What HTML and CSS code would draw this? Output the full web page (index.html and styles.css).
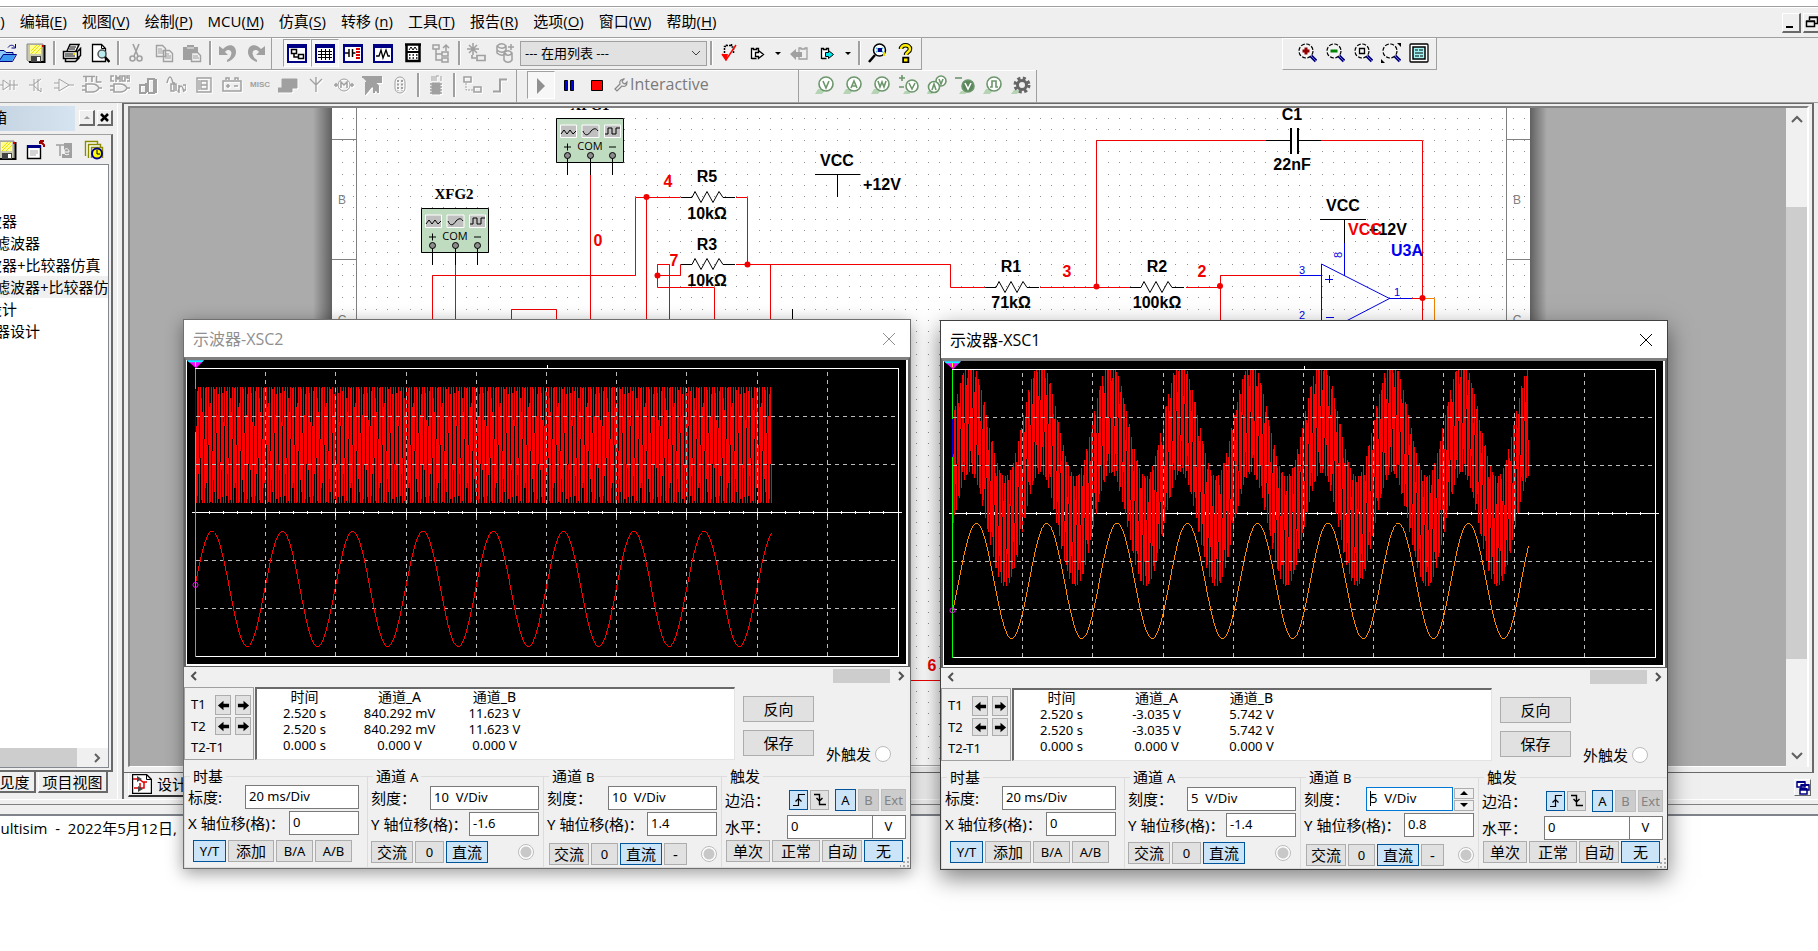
FILE: index.html
```html
<!DOCTYPE html>
<html lang="zh-CN">
<head>
<meta charset="utf-8">
<title>Multisim</title>
<link rel="stylesheet" href="styles.css">
</head>
<body>
<svg class="defs" aria-hidden="true">
  <defs>
    <symbol id="i-open" viewBox="0 0 20 20"><path d="M0 7h6l2 2h7v3H5L1 18H0z" fill="#8cc8f8"/><path d="M1 18L5 11h13l-4 7z" fill="#3c98f0"/><path d="M0 18.500h14.500L18.500 11.500H5.500L1 18M0 7.500h6l2 2h7v2M10 4.500c2-3 5-3 7 0M17.500 1v4h-4" fill="none" stroke="#00007c"/></symbol>
    <symbol id="i-save" viewBox="0 0 20 20"><path d="M1 1h16v18H3l-2-2z" fill="#c8c8b0" stroke="#888"/><path d="M18.500 2v17H3" stroke="#000" stroke-width="2" fill="none"/><path d="M4 2h11v9H4z" fill="#fffc90"/><path d="M5 8l6-6M5 11l9-9M9 11l6-6" stroke="#e8e000"/><path d="M5 13h10v6H5z" fill="#444"/><path d="M11 14h3v4h-3z" fill="#fff"/><path d="M16 2h2v2h-2z" fill="#d00"/></symbol>
    <symbol id="i-print" viewBox="0 0 20 20"><path d="M5 8L8 1.500h9L14 8M1.500 8.500h14l3-3v7l-3 3h-14zM15.500 8.500v7M3.500 15.500v3h10l4-4" fill="#fff" stroke="#000" stroke-width="1.500"/><path d="M8 4h6M7 6h6M3 11h10M3 13h10" stroke="#000"/><path d="M11 10h2v2h-2z" fill="#e8d800"/></symbol>
    <symbol id="i-preview" viewBox="0 0 20 20"><path d="M2.500 1.500h9l4 4v13h-13z" fill="#fff" stroke="#000" stroke-width="1.300"/><path d="M11.500 1.500v4h4" fill="none" stroke="#000"/><circle cx="12" cy="11" r="4" fill="#b8ecf0" stroke="#555" stroke-width="1.500"/><path d="M15 14l4.500 5" stroke="#000" stroke-width="2.500"/></symbol>
    <symbol id="i-cut" viewBox="0 0 20 20"><path d="M7 1l5 12M13 1L8 13" stroke="#a0a0a0" stroke-width="1.600"/><circle cx="6.500" cy="15.500" r="2.500" fill="none" stroke="#a0a0a0" stroke-width="1.600"/><circle cx="13.500" cy="15.500" r="2.500" fill="none" stroke="#a0a0a0" stroke-width="1.600"/></symbol>
    <symbol id="i-copy" viewBox="0 0 20 20"><path d="M2.500 2.500h6l3 3v8h-9zM9.500 7.500h6l3 3v8h-9z" fill="#efefef" stroke="#a0a0a0" stroke-width="1.400"/><path d="M4 6h4M4 8h5M4 10h5M11 11h4M11 13h6M11 15h6" stroke="#a0a0a0"/></symbol>
    <symbol id="i-paste" viewBox="0 0 20 20"><path d="M1 4h4V2h7v2h4v13H1z" fill="#a0a0a0"/><path d="M5 5h7" stroke="#efefef"/><path d="M9.500 9.500h6l3 3v6h-9z" fill="#efefef" stroke="#a0a0a0" stroke-width="1.400"/><path d="M11 13h5M11 15h6" stroke="#a0a0a0"/></symbol>
    <symbol id="i-undo" viewBox="0 0 20 20"><path d="M1 3v9h9l-3-3c3-4 8-1 6 3-.5 2-2 4-4 5v2c6-2 9-6 9-10 0-8-8-9-13-3z" fill="#a0a0a0"/></symbol>
    <symbol id="i-redo" viewBox="0 0 20 20"><path d="M19 3v9h-9l3-3c-3-4-8-1-6 3 .5 2 2 4 4 5v2c-6-2-9-6-9-10 0-8 8-9 13-3z" fill="#a0a0a0"/></symbol>
    <symbol id="i-design" viewBox="0 0 20 20"><path d="M1 2h18v17H1z" fill="#fff" stroke="#000084" stroke-width="2"/><path d="M0 1h20v4H0z" fill="#000084"/><path d="M4.500 6.500h5v4h-5zM11.500 11.500h5v4h-5zM7 10v4h4" fill="none" stroke="#000" stroke-width="1.500"/></symbol>
    <symbol id="i-grid" viewBox="0 0 20 20"><path d="M1 2h18v17H1z" fill="#fff" stroke="#000084" stroke-width="2"/><path d="M0 1h20v4H0z" fill="#000084"/><path d="M3 8.500h14M3 11.500h14M3 14.500h14M6.500 6v11M10.500 6v11M14.500 6v11" stroke="#000"/></symbol>
    <symbol id="i-comp" viewBox="0 0 20 20"><path d="M1 2h18v17H1z" fill="#fff" stroke="#000084" stroke-width="2"/><path d="M0 1h20v3H0z" fill="#000084"/><path d="M2 10h4M9.500 10h3M6 6v8M9.500 6v8" stroke="#000" stroke-width="1.500"/><path d="M13 5h4v2h-4zM13 8h4v2h-4zM13 11h4v2h-4zM13 14h4v2h-4z" fill="#e00000"/></symbol>
    <symbol id="i-graph" viewBox="0 0 20 20"><path d="M1 2h18v17H1z" fill="#fff" stroke="#000084" stroke-width="2"/><path d="M0 1h20v4H0z" fill="#000084"/><path d="M3 13h3l2-6 2 8 3-8 2 6h2" fill="none" stroke="#000" stroke-width="1.300"/></symbol>
    <symbol id="i-calc" viewBox="0 0 20 20"><path d="M2 1.500h16M3.500 2v16h13V2" fill="#fff" stroke="#000" stroke-width="2.500"/><path d="M6 7l2-3 2 3 2-3 2 3" fill="none" stroke="#000"/><path d="M3 9h14" stroke="#000" stroke-width="2"/><path d="M6 12h9M6 15h9" stroke="#000" stroke-width="1.500" stroke-dasharray="1.500 2"/></symbol>
    <symbol id="i-tree" viewBox="0 0 20 20"><path d="M2 2h6v4H2zM11 9h6v4h-6zM11 15h6v4h-6zM5 6v11h6M5 11h6M15 8V3M12 5l3-3 3 3" fill="none" stroke="#a0a0a0" stroke-width="1.500"/></symbol>
    <symbol id="i-new" viewBox="0 0 20 20"><path d="M6 0v12M0 6h12M2 2l8 8M10 2l-8 8" stroke="#a0a0a0" stroke-width="1.500"/><path d="M5 12v3h4M10 12.500h8v5h-8z" fill="none" stroke="#a0a0a0" stroke-width="1.700"/></symbol>
    <symbol id="i-db" viewBox="0 0 20 20"><g fill="none" stroke="#a0a0a0" stroke-width="1.500"><path d="M2 3c3-3 7-3 9 0v7c-2 3-6 3-9 0zM2 3c3 3 7 3 9 0M2 7c3 3 7 3 9 0"/><path d="M9 10c2-3 6-3 8 0v7c-2 3-6 3-8 0zM9 10c2 3 6 3 8 0M13 4h6M16 1v6" fill="#efefef"/></g></symbol>
    <symbol id="i-erc" viewBox="0 0 20 20"><path d="M5.500 13V3.500h2v-2M7 2.500h6M12.500 1v3h2V10" fill="none" stroke="#000" stroke-width="1.500" stroke-dasharray="2 1"/><path d="M3 11l4 6L17 2" stroke="red" fill="none" stroke-width="1.500"/><path d="M3 11h6l-2 7z" fill="red"/></symbol>
    <symbol id="i-page" viewBox="0 0 20 20"><path d="M4.500 16V5.500h2v1h3v-1h2v3M4.500 15.500h5" fill="#fff" stroke="#000" stroke-width="1.300"/><path d="M8.500 9.500h3v-2l5 4-5 4v-2h-3z" fill="#fff" stroke="#000" stroke-width="1.300"/></symbol>
    <symbol id="i-back" viewBox="0 0 20 20"><path d="M10 16V5h2v1h4V5h2v11z" fill="#efefef" stroke="#a0a0a0" stroke-width="1.300"/><path d="M1 11l6-5v3h6v5H7v3z" fill="#a0a0a0"/></symbol>
    <symbol id="i-fwd" viewBox="0 0 20 20"><path d="M4.500 16V5.500h2v1h3v-1h2v3M4.500 15.500h5" fill="#fff" stroke="#000" stroke-width="1.300"/><path d="M8.500 9.500h3v-2l5 4-5 4v-2h-3z" fill="#00e8f0" stroke="#000" stroke-width="1"/></symbol>
    <symbol id="i-find" viewBox="0 0 20 20"><circle cx="12.500" cy="7" r="6" fill="#fff" stroke="#000" stroke-width="1.500"/><path d="M8 12l-6 7" stroke="#000" stroke-width="2.500"/><path d="M9 5l7 4M9 9l7-4" stroke="#40c0d8" stroke-width="1.500"/><path d="M11 5h4v4h-4z" fill="#000084"/><path d="M17 9v4" stroke="#e8d800" stroke-width="2"/></symbol>
    <symbol id="i-help" viewBox="0 0 20 20"><path d="M6 6c0-5 9-5 9 0 0 3-4 3-4 6M9.500 16h2.500v2H9.500z" fill="none" stroke="#000" stroke-width="4.500"/><path d="M6 6c0-5 9-5 9 0 0 3-4 3-4 6" fill="none" stroke="#ffee00" stroke-width="2.600"/><path d="M9 15.500h3.500v3H9z" fill="#ffee00"/></symbol>
    <symbol id="i-mag" viewBox="0 0 20 20"><circle cx="9" cy="8" r="7" fill="#f4f4f4" stroke="#000" stroke-width="1.200" stroke-dasharray="4 1.500"/><path d="M14 13l5 5" stroke="#00007c" stroke-width="3.500"/><path d="M14 13l5 5" stroke="#6868d8"/></symbol>
    <symbol id="i-full" viewBox="0 0 20 20"><rect x="1" y="1" width="18" height="18" rx="1" fill="#fff" stroke="#000" stroke-width="1.300"/><path d="M4 4h12v12H4z" fill="#a0f4f4" stroke="#000" stroke-width="1.500"/><path d="M6 7h3M10 7h4M6 10h8M6 13h4M11 13h3" stroke="#000"/></symbol>
    <g id="gfx-pads">
      <path d="M0.500.500h67v44h-67z" fill="#c0dcc0" stroke="#000"/>
      <path d="M4.500 7h16v12.500h-16zM26 7h17v12.500H26zM48.500 7h16v12.500h-16z" fill="#c0c0c0" stroke="#fff"/>
      <path d="M5 16l3-4 3 4 3-4 3 4 3-3M27 13c2 5 5 5 8 0 3-3 5-3 7 0M49 16h3v-6h4v6h4v-6h4" fill="none" stroke="#000"/>
      <text x="34" y="32" text-anchor="middle" class="com">COM</text>
      <path d="M8 29h7M11.500 25.500v7M53 29h7" stroke="#000"/>
      <path d="M11.500 38v19M34.500 38v19M56.500 38v19" stroke="#000"/>
      <g fill="#8c8c8c" stroke="#000"><circle cx="11.500" cy="37.500" r="3"/><circle cx="34.500" cy="37.500" r="3"/><circle cx="56.500" cy="37.500" r="3"/></g>
    </g>
    <path id="res" d="M-11 .5h11l3-6 6 11 6-11 6 11 6-11 4 6h12" fill="none" stroke="#000"/>
    <symbol id="i-left" viewBox="0 0 14 14"><path d="M1 7l6-5v3h6v4H7v3z" fill="#000"/></symbol>
    <symbol id="i-right" viewBox="0 0 14 14"><path d="M13 7L7 2v3H1v4h6v3z" fill="#000"/></symbol>
    <symbol id="i-rise" viewBox="0 0 16 16"><path d="M2 13.500h5.500v-11H14M4.500 9.500l3-3 3 3" fill="none" stroke="#000" stroke-width="1.200"/></symbol>
    <symbol id="i-fall" viewBox="0 0 16 16"><path d="M2 2.500h5.500v10H14M4.500 6l3 3 3-3" fill="none" stroke="#000" stroke-width="1.400"/></symbol>
    <symbol id="i-x" viewBox="0 0 14 14"><path d="M1 1l12 12M13 1L1 13" stroke="currentColor" fill="none"/></symbol>
    <symbol id="i-grip" viewBox="0 0 10 10"><path d="M7 0h2v2H7zM7 4h2v2H7zM3 4h2v2H3zM7 8h2v2H7zM3 8h2v2H3zM0 8h1v2H0z" fill="#aaa"/></symbol>
  </defs>
</svg>

<div class="top-strip"></div>
<nav class="menubar">
  <a href="#" class="cut">文件(<u>F</u>)</a><a href="#">编辑(<u>E</u>)</a><a href="#">视图(<u>V</u>)</a><a href="#">绘制(<u>P</u>)</a><a href="#">MCU(<u>M</u>)</a><a href="#">仿真(<u>S</u>)</a><a href="#">转移 (<u>n</u>)</a><a href="#">工具(<u>T</u>)</a><a href="#">报告(<u>R</u>)</a><a href="#">选项(<u>O</u>)</a><a href="#">窗口(<u>W</u>)</a><a href="#">帮助(<u>H</u>)</a>
  <div class="mdi">
    <button aria-label="最小化"><svg width="16" height="16"><path d="M3 13h7" stroke="#000" stroke-width="2"/></svg></button>
    <button aria-label="还原"><svg width="16" height="16"><path d="M5.500 6V3.500h8v6H11M2.500 7.500h8v5h-8zM2 7h9M5 3h9" fill="none" stroke="#000" stroke-width="1.500"/></svg></button>
  </div>
</nav>

<div class="tool-row">
  <div class="toolbar first">
    <button aria-label="打开"><svg><use href="#i-open"/></svg></button>
    <button aria-label="保存"><svg><use href="#i-save"/></svg></button><i class="sep"></i>
    <button aria-label="打印"><svg><use href="#i-print"/></svg></button>
    <button aria-label="预览"><svg><use href="#i-preview"/></svg></button><i class="sep"></i>
    <button aria-label="剪切"><svg><use href="#i-cut"/></svg></button>
    <button aria-label="复制"><svg><use href="#i-copy"/></svg></button>
    <button aria-label="粘贴"><svg><use href="#i-paste"/></svg></button><i class="sep"></i>
    <button aria-label="撤销"><svg><use href="#i-undo"/></svg></button>
    <button aria-label="重做"><svg><use href="#i-redo"/></svg></button>
  </div>
  <div class="toolbar main-tools">
    <button class="on" aria-label="设计工具箱"><svg><use href="#i-design"/></svg></button>
    <button class="on" aria-label="电子表格"><svg><use href="#i-grid"/></svg></button>
    <button aria-label="元器件"><svg><use href="#i-comp"/></svg></button>
    <button class="gap" aria-label="图示仪"><svg><use href="#i-graph"/></svg></button>
    <button class="gap" aria-label="后处理器"><svg><use href="#i-calc"/></svg></button>
    <button aria-label="层次"><svg><use href="#i-tree"/></svg></button><i class="sep"></i>
    <button aria-label="创建元器件"><svg><use href="#i-new"/></svg></button>
    <button aria-label="数据库"><svg><use href="#i-db"/></svg></button>
    <select aria-label="在用列表"><option>--- 在用列表 ---</option></select><i class="sep"></i>
    <button aria-label="电气规则"><svg><use href="#i-erc"/></svg></button>
    <button aria-label="转移到布局"><svg><use href="#i-page"/></svg></button>
    <button class="drop" aria-label="更多"></button>
    <button aria-label="反向注解"><svg><use href="#i-back"/></svg></button>
    <button aria-label="正向注解"><svg><use href="#i-fwd"/></svg></button>
    <button class="drop" aria-label="更多"></button><i class="sep"></i>
    <button aria-label="查找"><svg><use href="#i-find"/></svg></button>
    <button aria-label="帮助"><svg><use href="#i-help"/></svg></button>
  </div>
  <div class="toolbar zoom">
    <button aria-label="放大"><svg viewBox="0 0 20 20"><use href="#i-mag"/><path d="M9 4.500v7M5.500 8h7" stroke="#900000" stroke-width="3"/></svg></button>
    <button aria-label="缩小"><svg viewBox="0 0 20 20"><use href="#i-mag"/><path d="M5.500 8h7" stroke="#008400" stroke-width="3"/></svg></button>
    <button aria-label="缩放区域"><svg viewBox="0 0 20 20"><use href="#i-mag"/><path d="M6.500 5.500h5v5h-5z" fill="none" stroke="#000" stroke-width="1.300"/></svg></button>
    <button aria-label="缩放页面"><svg viewBox="0 0 20 20"><use href="#i-mag"/><path d="M16 0h4v4zM0 16v4h4z"/></svg></button>
    <button aria-label="全屏"><svg><use href="#i-full"/></svg></button>
  </div>
</div>

<div class="tool-row second">
  <div class="toolbar first parts">
    <button aria-label="二极管"><svg viewBox="0 0 20 20"><path d="M0 10h5M5 5v10l7-5zM12 5v10M16 5v10M12 10h8"/></svg></button>
    <button aria-label="晶体管"><svg viewBox="0 0 20 20"><path d="M3 10h5M8 4v12M8 9l7-5M8 11l7 6M15 17v-4M12 4v12"/></svg></button>
    <button aria-label="模拟"><svg viewBox="0 0 20 20"><path d="M0 8h5M0 13h5M5 4v12l10-6zM15 10h5"/></svg></button>
    <button aria-label="TTL"><svg viewBox="0 0 20 20"><path d="M1 1.500h6M4 1v6M7 1.500h6M10 1v6M14.500 1v6h5M4 9h6c4 0 6 2 7 4-1 2-3 4-7 4H4zM0 11h4M0 15h4M17 13h3" stroke-width="1.600"/></svg></button>
    <button aria-label="CMOS"><svg viewBox="0 0 20 20"><path d="M4 1H1v5h3M6 7V1l2 3 2-3v6M12 1h3v5h-3zM20 1h-3v2h3v3h-3M4 9h6c4 0 6 2 7 4-1 2-3 4-7 4H4zM0 11h4M0 15h4M17 13h3" stroke-width="1.600"/></svg></button>
    <button aria-label="其他数字"><svg viewBox="0 0 20 20"><path d="M8 8v10M8 10H2v8h6M10 17V4h6v14h-6M18 4v14" stroke-width="2"/></svg></button>
    <button aria-label="混合"><svg viewBox="0 0 20 20"><path d="M1 8c2-8 4-8 6 0M8 7v9H5V9h5v7M12 17c2-8 4-8 6 0M13 10v8M17 10h3v5h-3" stroke-width="1.500"/></svg></button>
    <button aria-label="指示器"><svg viewBox="0 0 20 20"><path d="M3 3h14v14H3zM7 6h6v4H7zM7 10h6v4H7zM5 5v10" stroke-width="1.400"/></svg></button>
    <button aria-label="电源"><svg viewBox="0 0 20 20"><path d="M1 6h18v10H1zM4 5V3h3v2M13 5V3h3v2M4 11h4M6 9v4M12 11h4" stroke-width="1.500"/></svg></button>
    <button class="misc">MISC</button>
    <button aria-label="外设"><svg viewBox="0 0 20 20"><path d="M4 4h15v9H4zM0 13h14v4H0z" fill="#a0a0a0"/></svg></button>
    <button aria-label="射频"><svg viewBox="0 0 20 20"><path d="M10 17V8M10 10L4 4M10 10l6-6M10 2v8" stroke-width="1.400"/></svg></button>
    <button aria-label="机电"><svg viewBox="0 0 20 20"><circle cx="10" cy="10" r="6"/><path d="M0 10h4M16 10h4M7 13V7l3 3 3-3v6M2 8v4M18 8v4" stroke-width="1.500"/></svg></button>
    <button aria-label="NI"><svg viewBox="0 0 20 20"><path d="M0 2h19v5h-7l4 4v7M4 7h9L4 18V7M12 18v-5h4" fill="#a0a0a0" stroke-width="2"/></svg></button>
    <button aria-label="连接器"><svg viewBox="0 0 20 20"><rect x="5" y="2" width="10" height="16" rx="5"/><path d="M8 5v11M12 5v11" stroke-dasharray="2 1.500" stroke-width="2"/></svg></button><i class="sep"></i>
    <button aria-label="MCU"><svg viewBox="0 0 20 20"><path d="M6 1v5M8 1v5M10 6V1h3M15 1v5"/><path d="M6 8h8v11H6z" fill="#a0a0a0"/><path d="M4 9h12M4 12h12M4 15h12M4 18h12" stroke-width="1.400"/></svg></button><i class="sep"></i>
    <button aria-label="层次块"><svg viewBox="0 0 20 20"><path d="M2 2h7v5H2zM12 12h7v5h-7z" stroke-width="1.600"/><path d="M4 8v7h7" stroke-dasharray="2 1"/></svg></button>
    <button aria-label="总线"><svg viewBox="0 0 20 20"><path d="M3 16.500h7V4.500h7" stroke-width="2"/></svg></button>
  </div>
  <div class="toolbar sim">
    <button class="on" aria-label="运行"><svg viewBox="0 0 20 20"><path d="M6 3l8 8-8 8z" fill="#909090"/></svg></button>
    <button aria-label="暂停"><svg viewBox="0 0 20 20"><path d="M5.500 5.500h3v10h-3zM11.500 5.500h3v10h-3z" fill="#0000e0" stroke="#000"/></svg></button>
    <button aria-label="停止"><svg viewBox="0 0 20 20"><path d="M4.500 5.500h11v10h-11z" fill="red" stroke="#000"/></svg></button>
    <svg class="wrench" viewBox="0 0 14 14"><path d="M1 11l5-5c-1-3 1-5 4-5L8 3l1 2 2 1 2-2c0 4-2 5-5 4l-5 5z" fill="none" stroke="#888" stroke-width="1.200"/></svg>
    <span>Interactive</span>
  </div>
  <div class="toolbar probes">
    <button aria-label="电压探针"><svg viewBox="0 0 20 20"><path class="tip" d="M3 14h8l-4 5H0z"/><circle cx="11" cy="9" r="7"/><path d="M8 6l3 7 3-7"/></svg></button>
    <button aria-label="电流探针"><svg viewBox="0 0 20 20"><path class="tip" d="M3 14h8l-4 5H0z"/><circle cx="11" cy="9" r="7"/><path d="M8 13l3-7 3 7M9 11h4"/></svg></button>
    <button aria-label="功率探针"><svg viewBox="0 0 20 20"><path class="tip" d="M3 14h8l-4 5H0z"/><circle cx="11" cy="9" r="7"/><path d="M7 6l2 6 2-5 2 5 2-6"/></svg></button>
    <button aria-label="差分探针"><svg viewBox="0 0 20 20"><path class="tip" d="M6 16h8l-4 3H4z"/><path d="M0 3h6M3 0v6M0 12h5"/><circle cx="13" cy="11" r="6"/><path d="M10 8l3 6 3-6"/></svg></button>
    <button aria-label="电压电流"><svg viewBox="0 0 20 20"><path class="tip" d="M1 16h8l-4 3H0z"/><circle cx="14" cy="6" r="5"/><circle cx="7" cy="12" r="5.500"/><path d="M5 15l2-6 2 6M12 4l2 5 2-5"/></svg></button>
    <button aria-label="参考探针"><svg viewBox="0 0 20 20"><path class="tip" d="M6 16h8l-4 3H4z"/><path d="M0 3h7"/><circle cx="13" cy="11" r="6" fill="#5c865c"/><path d="M10 8l3 6 3-6" class="inv"/></svg></button>
    <button aria-label="数字探针"><svg viewBox="0 0 20 20"><path class="tip" d="M3 14h8l-4 5H0z"/><circle cx="11" cy="9" r="7"/><path d="M7 12h2V6h4v6h2"/></svg></button>
    <button aria-label="设置"><svg viewBox="0 0 20 20"><path class="tip" d="M3 15h6l-3 4H0z"/><circle cx="11" cy="10" r="6.500" fill="none" stroke="#666" stroke-width="4" stroke-dasharray="2.800 2.300"/><circle cx="11" cy="10" r="4.500" fill="#efefef" stroke="#666" stroke-width="3"/></svg></button>
  </div>
</div>

<main class="work">
  <aside class="toolbox">
    <header><h2>箱</h2>
      <button aria-label="收起"><svg width="12" height="12"><path d="M3 7l3-3 3 3z" fill="#a0a0a0"/></svg></button>
      <button aria-label="关闭"><svg width="12" height="12"><path d="M2 2l7 7M9 2L2 9" stroke="#000" stroke-width="2.500"/></svg></button>
    </header>
    <div class="panel">
      <div class="panel-tools">
        <button aria-label="保存"><svg><use href="#i-save"/></svg></button>
        <button aria-label="新建"><svg viewBox="0 0 20 20"><path d="M1.500 6h13v12.500h-13z" fill="#fff" stroke="#000" stroke-width="1.400"/><path d="M1 5h14v3H1z" fill="#000084"/><path d="M4 11h8M4 13h8M4 15h6" stroke="#aaa"/><path d="M14 1h4M14 1v3M14 1l4 4v2" stroke="#a00000" stroke-width="2" fill="none"/></svg></button>
        <button aria-label="重命名"><svg viewBox="0 0 20 20"><path d="M1 5h8M5 5v11" stroke="#a0a0a0" stroke-width="1.500"/><path d="M9 3h8v15H7v-4h2z" fill="#a0a0a0"/><path d="M9 12h5c0-5-6-4-5 1 .5 2 4 2 5 1" fill="none" stroke="#fff"/></svg></button>
        <button aria-label="历史"><svg viewBox="0 0 20 20"><path d="M1.500 16V1.500h12V4M4.500 18V4.500h12V7M7.500 18V7.500h11V18" fill="#fff" stroke="#8a8a00" stroke-width="1.400"/><circle cx="13" cy="13.500" r="5" fill="#ff0" stroke="#000084" stroke-width="2"/><path d="M13 10v4h3" stroke="#000" fill="none"/></svg></button>
      </div>
      <div class="tree">
        <ul>
          <li>波器</li><li class="in">滤波器</li><li>波器+比较器仿真</li><li class="in sel">滤波器+比较器仿真</li><li>设计</li><li class="in">器设计</li>
        </ul>
        <div class="hbar"><i></i><svg width="8" height="12"><path d="M1 2l4 4-4 4" fill="none" stroke="#606060" stroke-width="2"/></svg></div>
      </div>
    </div>
    <div class="side-tabs"><button>见度</button><button>项目视图</button></div>
  </aside>

  <section class="document">
    <div class="sheet-frame">
      <div class="canvas">
        <svg class="sheet" viewBox="130 108 1657 657" width="1657" height="657">
          <defs>
            <linearGradient id="sl"><stop offset="0" stop-color="#ababab"/><stop offset="1" stop-color="#606060"/></linearGradient>
            <linearGradient id="sr"><stop offset="0" stop-color="#606060"/><stop offset="1" stop-color="#ababab"/></linearGradient>
          </defs>
          <rect x="313" y="108" width="19" height="657" fill="url(#sl)"/>
          <rect x="1530" y="108" width="17" height="657" fill="url(#sr)"/>
          <rect x="332" y="108" width="1198" height="657" fill="#fff"/>
          <path id="dots" stroke="#909090"/>
          <path d="M356.500 108v657M1506.500 108v657M332 139.500h24M332 259.500h24M1506 139.500h24M1506 259.500h24" stroke="#808080"/>
          <g class="zone"><text x="342" y="204">B</text><text x="342" y="324">C</text><text x="1517" y="204">B</text><text x="1517" y="324">C</text></g>
          <g fill="none" stroke="#f00000">
            <path d="M590.500 174v150M432.500 324v-48.500h203v-78h45M646.500 197v127M455.500 264v60M511.500 324v-14.500h45v14.500M736 197.500h11.500v67M770.500 324v-59.500M736 264.500h214.500v23h35M680.500 264.500v11h-23M669.500 324v-59.500h-12v23h57v37"/>
            <path d="M1096.500 287v-146.500h170M1320 140.500h102.500v184M1040 287.500h90M1186 287.500h34.500v-12h80M1220.500 287v37M1412 298.500h11M905 680.500h40"/>
            <path d="M1423 298.500h11.500v26" stroke="#f08000"/>
          </g>
          <g fill="#f00000"><circle cx="646.500" cy="197" r="3"/><circle cx="747.500" cy="264.500" r="3"/><circle cx="657.500" cy="275.500" r="3"/><circle cx="1096.500" cy="286.500" r="3"/><circle cx="1220" cy="286" r="3"/><circle cx="1422.500" cy="298" r="3"/></g>
          <use href="#gfx-pads" x="556" y="118"/><use href="#gfx-pads" x="421" y="208"/>
          <g class="serif"><text x="590" y="110">XFG1</text><text x="454" y="199">XFG2</text></g>
          <use href="#res" x="692" y="197"/><use href="#res" x="692" y="264"/><use href="#res" x="996" y="287"/><use href="#res" x="1141" y="287"/>
          <path d="M815 174.500h45M837.500 174v23M792.500 309v15M1266 140.500h24M1297 140.500h24M1320 219.500h46M1344.500 219v24" stroke="#000"/>
          <path d="M1291 128v26M1298 128v26" stroke="#000" stroke-width="2"/>
          <g class="lbl"><text x="707" y="182">R5</text><text x="707" y="219">10kΩ</text><text x="707" y="250">R3</text><text x="707" y="286">10kΩ</text><text x="837" y="166">VCC</text><text x="882" y="190">+12V</text><text x="1011" y="272">R1</text><text x="1011" y="308">71kΩ</text><text x="1157" y="272">R2</text><text x="1157" y="308">100kΩ</text><text x="1292" y="120">C1</text><text x="1292" y="170">22nF</text><text x="1343" y="211">VCC</text><text x="1388" y="235">+12V</text></g>
          <g class="lbl red"><text x="668" y="187">4</text><text x="674" y="266">7</text><text x="598" y="246">0</text><text x="1067" y="277">3</text><text x="1202" y="277">2</text><text x="1365" y="235">VCC</text><text x="932" y="671">6</text></g>
          <text class="lbl blue" x="1407" y="256">U3A</text>
          <path d="M1344.500 243v33M1300 275.500h21M1321.500 324v-60l68 34.500-50 26M1389 298.500h23M1300 320.500h21M1325 279.500h8M1329.500 275v8M1326 317.500h8" fill="none" stroke="#0000e8"/>
          <g class="pin"><text x="1302" y="274">3</text><text x="1302" y="319">2</text><text x="1397" y="296">1</text><text transform="translate(1342 255) rotate(-90)">8</text></g>
        </svg>
      </div>
      <div class="vbar"><svg width="12" height="8"><path d="M1 7l5-5 5 5" fill="none" stroke="#606060" stroke-width="2"/></svg><i></i><svg width="12" height="8"><path d="M1 1l5 5 5-5" fill="none" stroke="#606060" stroke-width="2"/></svg></div>
    </div>
    <div class="doc-tabs">
      <button><svg width="20" height="20" viewBox="0 0 20 20"><path d="M.5.500h14l5 5v14H.5z" fill="#fff" stroke="#000" stroke-width="1.400"/><path d="M14.500.500v5h5" fill="none" stroke="#000"/><path d="M1 5h6l4 3h4M2 14h6V9M12 8v6H8" fill="none" stroke="#e00000" stroke-width="1.500"/><path d="M5 2v6l5-3zM6 12v6l5-3z" fill="#444"/></svg>设计</button>
      <button class="stack" aria-label="窗口列表"><svg width="14" height="14" viewBox="0 0 14 14"><path d="M1 1h8v5H1zM5 4h8v5H5zM4 8h7v5H4z" fill="#fff" stroke="#000084" stroke-width="1.500"/><path d="M1 1h8M5 4h8M4 8h7" stroke="#000084" stroke-width="2"/></svg></button>
    </div>
  </section>
</main>

<footer class="log"><p>Multisim&nbsp; -&nbsp; 2022年5月12日, </p></footer>

<section class="scope xsc2">
  <header><h1>示波器-XSC2</h1><button aria-label="关闭"><svg width="14" height="14"><use href="#i-x"/></svg></button></header>
  <div class="screen"><svg viewBox="0 0 720 304" data-scope="2"></svg></div>
  <div class="track"><svg width="8" height="10"><path d="M6 1L2 5l4 4" fill="none" stroke="#505050" stroke-width="2"/></svg><i></i><svg width="8" height="10"><path d="M2 1l4 4-4 4" fill="none" stroke="#505050" stroke-width="2"/></svg></div>
  <div class="readout">
    <div class="cursors"><span>T1</span><button aria-label="T1 左"><svg><use href="#i-left"/></svg></button><button aria-label="T1 右"><svg><use href="#i-right"/></svg></button><span>T2</span><button aria-label="T2 左"><svg><use href="#i-left"/></svg></button><button aria-label="T2 右"><svg><use href="#i-right"/></svg></button><span class="wide">T2-T1</span></div>
    <div class="values"><table>
      <tr><th>时间</th><th>通道_A</th><th>通道_B</th></tr>
      <tr><td>2.520 s</td><td>840.292 mV</td><td>11.623 V</td></tr>
      <tr><td>2.520 s</td><td>840.292 mV</td><td>11.623 V</td></tr>
      <tr><td>0.000 s</td><td>0.000 V</td><td>0.000 V</td></tr>
    </table></div>
    <div class="actions"><button>反向</button><button>保存</button></div>
    <label class="ext">外触发<input type="radio" name="e2"></label>
  </div>
  <div class="groups">
    <fieldset class="g1"><legend>时基</legend>
      <div class="row"><label for="a1">标度:</label><input id="a1" class="w114" value="20 ms/Div"></div>
      <div class="row"><label for="a2">X 轴位移(格)：</label><input id="a2" class="w70" value="0"></div>
      <div class="btns"><button class="act w33">Y/T</button><button class="w46">添加</button><button class="w37">B/A</button><button class="w37">A/B</button></div>
    </fieldset>
    <fieldset class="g2"><legend>通道 <small>A</small></legend>
      <div class="row"><label for="a3">刻度：</label><input id="a3" class="w109" value="10  V/Div"></div>
      <div class="row"><label for="a4">Y 轴位移(格)：</label><input id="a4" class="w70" value="-1.6"></div>
      <div class="btns"><button class="w42">交流</button><button class="w29">0</button><button class="act w42">直流</button><input type="radio" name="c2a" checked disabled aria-label="通道 A"></div>
    </fieldset>
    <fieldset class="g3"><legend>通道 <small>B</small></legend>
      <div class="row"><label for="a5">刻度：</label><input id="a5" class="w109" value="10  V/Div"></div>
      <div class="row"><label for="a6">Y 轴位移(格)：</label><input id="a6" class="w70" value="1.4"></div>
      <div class="btns"><button class="w40">交流</button><button class="w27">0</button><button class="act w42">直流</button><button class="w23">-</button><input type="radio" name="c2b" checked disabled aria-label="通道 B"></div>
    </fieldset>
    <fieldset class="g4"><legend>触发</legend>
      <div class="row edge"><span>边沿：</span><button class="act" aria-label="上升沿"><svg><use href="#i-rise"/></svg></button><button aria-label="下降沿"><svg><use href="#i-fall"/></svg></button><button class="act src">A</button><button class="src" disabled>B</button><button class="src x" disabled>Ext</button></div>
      <div class="row level"><label for="a7">水平：</label><input id="a7" class="w85" value="0"><input class="w34" value="V" aria-label="单位"></div>
      <div class="btns"><button class="w44">单次</button><button class="w48">正常</button><button class="w40">自动</button><button class="act w39">无</button></div>
      <svg class="grip"><use href="#i-grip"/></svg>
    </fieldset>
  </div>
</section>

<section class="scope xsc1">
  <header><h1>示波器-XSC1</h1><button aria-label="关闭"><svg width="14" height="14"><use href="#i-x"/></svg></button></header>
  <div class="screen"><svg viewBox="0 0 720 304" data-scope="1"></svg></div>
  <div class="track"><svg width="8" height="10"><path d="M6 1L2 5l4 4" fill="none" stroke="#505050" stroke-width="2"/></svg><i></i><svg width="8" height="10"><path d="M2 1l4 4-4 4" fill="none" stroke="#505050" stroke-width="2"/></svg></div>
  <div class="readout">
    <div class="cursors"><span>T1</span><button aria-label="T1 左"><svg><use href="#i-left"/></svg></button><button aria-label="T1 右"><svg><use href="#i-right"/></svg></button><span>T2</span><button aria-label="T2 左"><svg><use href="#i-left"/></svg></button><button aria-label="T2 右"><svg><use href="#i-right"/></svg></button><span class="wide">T2-T1</span></div>
    <div class="values"><table>
      <tr><th>时间</th><th>通道_A</th><th>通道_B</th></tr>
      <tr><td>2.520 s</td><td>-3.035 V</td><td>5.742 V</td></tr>
      <tr><td>2.520 s</td><td>-3.035 V</td><td>5.742 V</td></tr>
      <tr><td>0.000 s</td><td>0.000 V</td><td>0.000 V</td></tr>
    </table></div>
    <div class="actions"><button>反向</button><button>保存</button></div>
    <label class="ext">外触发<input type="radio" name="e1"></label>
  </div>
  <div class="groups">
    <fieldset class="g1"><legend>时基</legend>
      <div class="row"><label for="b1">标度:</label><input id="b1" class="w114" value="20 ms/Div"></div>
      <div class="row"><label for="b2">X 轴位移(格)：</label><input id="b2" class="w70" value="0"></div>
      <div class="btns"><button class="act w33">Y/T</button><button class="w46">添加</button><button class="w37">B/A</button><button class="w37">A/B</button></div>
    </fieldset>
    <fieldset class="g2"><legend>通道 <small>A</small></legend>
      <div class="row"><label for="b3">刻度：</label><input id="b3" class="w109" value="5  V/Div"></div>
      <div class="row"><label for="b4">Y 轴位移(格)：</label><input id="b4" class="w70" value="-1.4"></div>
      <div class="btns"><button class="w42">交流</button><button class="w29">0</button><button class="act w42">直流</button><input type="radio" name="c1a" checked disabled aria-label="通道 A"></div>
    </fieldset>
    <fieldset class="g3"><legend>通道 <small>B</small></legend>
      <div class="row"><label for="b5">刻度：</label><div class="focused"><input id="b5" class="w87" value="5  V/Div"></div><div class="spin"><button aria-label="增加"><svg width="8" height="4"><path d="M0 4l4-4 4 4z"/></svg></button><button aria-label="减少"><svg width="8" height="4"><path d="M0 0l4 4 4-4z"/></svg></button></div></div>
      <div class="row"><label for="b6">Y 轴位移(格)：</label><input id="b6" class="w70" value="0.8"></div>
      <div class="btns"><button class="w40">交流</button><button class="w27">0</button><button class="act w42">直流</button><button class="w23">-</button><input type="radio" name="c1b" checked disabled aria-label="通道 B"></div>
    </fieldset>
    <fieldset class="g4"><legend>触发</legend>
      <div class="row edge"><span>边沿：</span><button class="act" aria-label="上升沿"><svg><use href="#i-rise"/></svg></button><button aria-label="下降沿"><svg><use href="#i-fall"/></svg></button><button class="act src">A</button><button class="src" disabled>B</button><button class="src x" disabled>Ext</button></div>
      <div class="row level"><label for="b7">水平：</label><input id="b7" class="w85" value="0"><input class="w34" value="V" aria-label="单位"></div>
      <div class="btns"><button class="w44">单次</button><button class="w48">正常</button><button class="w40">自动</button><button class="act w39">无</button></div>
      <svg class="grip"><use href="#i-grip"/></svg>
    </fieldset>
  </div>
</section>
<script src="scope.js"></script>
</body>
</html>
```

FILE: styles.css
```css
* { box-sizing: border-box; }
:root { --ui: "Open Sans", "Noto Sans CJK SC", sans-serif; --dlg: "Noto Sans", "Noto Sans CJK SC", sans-serif; }
body { margin: 0; height: 100vh; display: flex; flex-direction: column; background: #efefef; overflow: hidden; position: relative; font: 15px/20px var(--ui); color: #000; }
button, input, select { font: inherit; color: inherit; margin: 0; padding: 0; border-radius: 0; }
button { border: 0; background: none; display: flex; align-items: center; justify-content: center; flex: none; }
h1, h2, p, ul { margin: 0; padding: 0; font-weight: 400; }
.defs { position: absolute; width: 0; height: 0; }

.top-strip { height: 7px; flex: none; background: #fff; border-bottom: 1px solid #a0a0a0; }
.menubar { height: 31px; flex: none; display: flex; align-items: center; gap: 15px; padding-bottom: 3px; border-top: 1px solid #fff; border-bottom: 1px solid #a0a0a0; white-space: nowrap; }
.menubar a { color: #000; text-decoration: none; }
.menubar u { text-underline-offset: 2px; }
.menubar .cut { margin-left: -42px; }
.mdi { margin-left: auto; display: flex; gap: 2px; margin: 3px -4px 0 auto; }
.mdi button { width: 19px; height: 20px; border: 1px solid #fff; border-right: 2px solid #696969; border-bottom: 2px solid #696969; }

.tool-row { height: 32px; flex: none; display: flex; }
.toolbar { display: flex; align-items: center; border-right: 1px solid #a0a0a0; border-bottom: 1px solid #a0a0a0; padding-bottom: 1px; box-shadow: inset 0 1px #fff; flex: none; }
.toolbar.first { padding-left: 0; margin-left: -6px; width: 278px; }
.toolbar button { width: 28px; height: 28px; }
.toolbar button svg { width: 20px; height: 20px; }
.toolbar .on { border: 1px solid #a0a0a0; border-right-color: #fff; border-bottom-color: #fff; background: #f7f7f7; }
.sep { width: 8px; height: 24px; flex: none; display: flex; justify-content: center; }
.sep::after { content: ""; width: 2px; background: #a0a0a0; border-right: 1px solid #fff; }
.main-tools { padding-left: 11px; width: 650px; }
.main-tools .gap { margin-left: 2px; }
.main-tools select { width: 187px; height: 25px; margin-left: 1px; border: 1px solid #a0a0a0; background: #e1e1e1 url("data:image/svg+xml,%3Csvg xmlns='http://www.w3.org/2000/svg' width='10' height='6'%3E%3Cpath d='M1 1l4 4 4-4' fill='none' stroke='%23404040'/%3E%3C/svg%3E") no-repeat right 5px center; appearance: none; padding-left: 4px; font-size: 13px; }
.toolbar .drop { width: 14px; }
.drop::after { content: ""; border: 3px solid transparent; border-top-color: #000; border-bottom: 0; }
.zoom { margin-left: 360px; width: 155px; padding-left: 10px; border-left: 1px solid #fff; }
.second .toolbar { border-bottom: 0; padding-bottom: 2px; }
.second .first { width: 523px; }
.parts svg { fill: none; stroke: #a0a0a0; filter: drop-shadow(1px 1px #fff); }
.toolbar .misc { font: bold 8px/10px "Liberation Sans", sans-serif; color: #a0a0a0; }
.sim { width: 282px; padding-left: 10px; color: #7a7a7a; }
.sim .wrench { width: 14px; height: 14px; margin-left: 3px; }
.sim span { font-size: 16px; margin-left: 2px; padding-bottom: 2px; }
.probes { width: 238px; padding-left: 12px; }
.probes svg { fill: #fff; stroke: #6c966c; stroke-width: 1.600; }
.probes .tip { fill: #b4d4b4; stroke: none; }
.probes .inv { stroke: #fff; fill: none; }

.work { flex: 1; min-height: 0; display: flex; border-top: 1px solid #a0a0a0; }
.toolbox { width: 118px; flex: none; display: flex; flex-direction: column; border-right: 1px solid #fff; padding: 2px 4px 5px 0; overflow: hidden; }
.toolbox header { height: 26px; display: flex; align-items: center; gap: 2px; }
.toolbox h2 { width: 76px; height: 25px; background: linear-gradient(90deg, #c6d5e3, #d6e3f1); text-indent: -8px; font-size: 15px; line-height: 22px; margin-right: 2px; }
.toolbox header button { width: 16px; height: 16px; border: 1px solid #fff; border-right: 2px solid #696969; border-bottom: 2px solid #696969; }
.panel { flex: 1; min-height: 0; margin-top: 3px; display: flex; flex-direction: column; border-top: 1px solid #a0a0a0; border-right: 2px solid #696969; border-bottom: 2px solid #696969; padding: 0 2px 2px 0; }
.panel-tools { height: 29px; flex: none; display: flex; align-items: center; gap: 9px; margin-left: -3px; }
.panel-tools svg { width: 20px; height: 20px; }
.tree { flex: 1; min-height: 0; background: #fff; border: 1px solid #828790; border-left: 0; display: flex; flex-direction: column; overflow: hidden; }
.tree ul { list-style: none; flex: 1; margin-left: -13px; padding-top: 45px; }
.tree li { height: 22px; line-height: 22px; white-space: nowrap; overflow: hidden; }
.tree .in { padding-left: 8px; }
.tree .sel { background: #f0f0f0; }
.hbar { height: 19px; background: #f0f0f0; display: flex; align-items: center; justify-content: space-between; padding-right: 6px; }
.hbar i { width: 77px; height: 19px; background: #cdcdcd; }
.side-tabs { height: 22px; flex: none; display: flex; gap: 2px; }
.side-tabs button { border: 1px solid #fff; border-top: 0; border-right: 2px solid #696969; border-bottom: 2px solid #696969; padding: 0 4px; font-size: 15px; width: 70px; height: 21px; white-space: nowrap; }
.side-tabs button:first-child { width: 36px; border-left: 0; padding: 0 5px 0 0; }

.document { flex: 1; min-width: 0; margin-left: 4px; display: flex; flex-direction: column; border-left: 2px solid #696969; }
.sheet-frame { flex: 1; min-height: 0; display: flex; padding: 2px 3px 5px 4px; border: 1px solid #696969; border-left: 0; border-right-width: 2px; margin-right: 4px; }
.canvas { flex: 1; min-width: 0; border: 2px solid #808080; border-right: 0; border-bottom: 1px solid #fff; background: #ababab; overflow: hidden; }
.sheet { display: block; }
.vbar { width: 23px; background: #f0f0f0; border-top: 2px solid #808080; border-right: 2px solid #fff; display: flex; flex-direction: column; align-items: center; padding: 7px 0; }
.vbar i { width: 21px; flex: none; height: 70%; margin: 84px 0 auto; background: #cdcdcd; }
.doc-tabs { height: 26px; flex: none; display: flex; align-items: flex-start; padding: 0 7px 0 4px; }
.doc-tabs button { height: 24px; gap: 5px; padding: 0 3px; border-left: 1px solid #fff; border-bottom: 2px solid #333; }
.doc-tabs .stack { margin: 6px 0 0 auto; width: 17px; height: 17px; border: 1px solid #fff; border-right-color: #696969; border-bottom-color: #696969; padding: 0; }

.sheet text { text-anchor: middle; }
.sheet .lbl, .sheet .lbl text { font: bold 16px "Liberation Sans", sans-serif; }
.sheet .red { fill: #f00000; }
.sheet .blue { fill: #0000f0; }
.sheet .zone text { font: 12px "Liberation Sans", sans-serif; fill: #808080; }
.sheet .pin text { font: 11px "Liberation Sans", sans-serif; fill: #0000e8; }
.sheet .serif text { font: bold 15px "Liberation Serif", serif; }
.com { font: 11px "Open Sans", sans-serif; }

.log { height: 152px; flex: none; border-top: 1px solid #fff; padding-top: 4px; display: flex; flex-direction: column; }
.log::before { content: ""; height: 9px; flex: none; border-top: 1px solid #808080; border-bottom: 2px solid #80838c; }
.log p { flex: 1; background: #fff; padding-top: 2px; text-indent: -13px; font-size: 15px; }

.scope { position: absolute; width: 728px; background: #f0f0f0; border: 1px solid #707070; box-shadow: 0 4px 16px rgba(0, 0, 0, .4); font-family: var(--dlg); }
.xsc2 { left: 183px; top: 319px; }
.xsc1 { left: 940px; top: 320px; border-color: #404040; box-shadow: 0 8px 22px rgba(0, 0, 0, .5); }
.scope header { height: 37px; background: #fff; display: flex; align-items: center; justify-content: space-between; padding: 0 14px 0 9px; }
.scope h1 { font: 16px/20px var(--ui); }
.xsc2 header { color: #909090; }
.screen { border: solid #606060; border-width: 3px 2px 1px; padding: 0 2px 2px 1px; background: #fff; border-top-color: #808080; }
.screen svg { display: block; width: 100%; height: 304px; background: #000; }
.track { height: 17px; display: flex; align-items: center; padding: 0 5px 0 6px; }
.track i { width: 57px; height: 14px; margin: 0 7px 0 auto; background: #cdcdcd; }
.readout { display: flex; align-items: stretch; height: 73px; margin-top: 3px; }
.cursors { width: 70px; border: 1px solid #a0a0a0; display: grid; grid-template-columns: 20px 16px 16px; column-gap: 4px; row-gap: 2px; grid-template-rows: 20px 18px 20px; padding: 7px 0 0 6px; font-size: 13px; line-height: 18px; white-space: nowrap; }
.cursors svg { width: 13px; height: 13px; }
.cursors button, .actions button, .btns button, .edge button { background: #e1e1e1; border: 1px solid #adadad; }
.wide { grid-column: 1 / 4; padding-top: 1px; }
.values { width: 480px; margin-left: 1px; background: #fff; border: 2px solid #696969; border-right: 1px solid #e3e3e3; border-bottom: 1px solid #e3e3e3; }
.values table { border-collapse: collapse; table-layout: fixed; width: 285px; font-size: 13px; line-height: 16px; }
.values th, .values td { padding: 0; font-weight: 400; text-align: center; width: 95px; height: 16px; }
.values th { font-size: 14px; }
.actions { margin: 9px 0 0 8px; width: 71px; display: flex; flex-direction: column; gap: 8px; }
.actions button { height: 26px; }
.ext { align-self: flex-end; margin: 0 0 -6px 12px; display: flex; align-items: center; gap: 4px; height: 20px; padding-bottom: 4px; white-space: nowrap; font-size: 15px; }
.scope input[type=radio] { appearance: none; width: 16px; height: 16px; border: 1px solid #bcbcbc; border-radius: 50%; background: #fff; flex: none; }
.scope input[type=radio]:checked { background: radial-gradient(#c8c8c8 5px, #fff 6px); }
.groups { display: grid; grid-template-columns: 183fr 176fr 178fr 189fr; margin-top: 6px; }
.groups fieldset { position: relative; margin: 0; min-width: 0; border: 1px solid #dcdcdc; border-right-width: 0; padding: 0 4px 2px 3px; height: 102px; }
.groups .g1 { padding: 0 8px 2px 3px; }
.groups legend { margin-left: 2px; padding: 0 3px; line-height: 20px; }
.groups small { font-size: 13px; }
.row { display: flex; align-items: center; height: 24px; margin: -1px 0 3px; white-space: nowrap; font-size: 15px; }
.row + .row { margin: -1px 0 5px; }
.row label, .row span { width: 1px; flex: 1; overflow: visible; }
.row input { height: 24px; border: 1px solid #7a7a7a; background: #fff; padding: 0 4px 2px 3px; font-size: 13px; white-space: pre; }
.w114 { width: 114px; } .w109 { width: 109px; } .w70 { width: 70px; } .w87 { width: 87px; } .w85 { width: 86px; } .w34 { width: 34px; }
.row .w34 { text-align: center; margin-left: -1px; }
.g4 .level { padding-top: 4px; height: 28px; margin-bottom: 1px; }
.edge button { width: 19px; height: 20px; margin-right: 2px; }
.edge svg { width: 16px; height: 16px; }
.edge { padding-top: 5px; }
.edge .src { width: 21px; height: 22px; font-size: 13px; }
.edge .act.src { margin-left: 4px; }
.edge .x { width: 25px; margin-right: 0; }
.edge button:disabled { background: #ccc; border-color: #bfbfbf; color: #838383; }
.focused { position: relative; }
.row .focused input { border-color: #0078d7; }
.focused::after { content: ""; position: absolute; left: 4px; top: 4px; width: 1px; height: 15px; background: #000; }
.spin { display: flex; flex-direction: column; width: 20px; margin-left: 1px; gap: 1px; }
.spin button { height: 11px; border: 1px solid #adadad; }
.btns { display: flex; align-items: center; gap: 2px; font-size: 15px; }
.btns button { height: 22px; white-space: nowrap; line-height: 18px; }
.g1 .btns { padding-left: 5px; }
.g3 .btns { padding: 2px 0 0 2px; }
.g4 .btns { padding-left: 1px; }
.btns input { margin: 0 5px 0 auto; }
.g3 .btns input { margin-right: 0; }
.w33 { width: 33px; font-size: 13px; } .w37 { width: 37px; font-size: 13px; } .w29 { width: 29px; font-size: 13px; } .w27 { width: 27px; font-size: 13px; }
.w46 { width: 46px; } .w42 { width: 42px; } .w40 { width: 40px; } .w23 { width: 23px; } .w44 { width: 44px; } .w48 { width: 48px; } .w39 { width: 39px; }
.scope .act { background: #cce4f7; border: 1px solid #005499; }
.grip { position: absolute; right: 0; bottom: 0; width: 10px; height: 10px; }
```

FILE: scope.js
```js
// Grid dots of the schematic sheet, snapped to whole pixels.
let dots = '';
for (let j = 0; j < 59; j++) {
  for (let i = 0; i < 106; i++) {
    const x = Math.round(342 + i * 11.26), y = Math.floor(118 + j * 11.24) + 0.5;
    dots += `M${x} ${y}h1`;
  }
}
document.getElementById('dots').setAttribute('d', dots);

// Oscilloscope screens: 10 x 6 divisions.
const DIV = 70.4, LEFT = 8.5, TOP = 8.5, BOTTOM = 296.5, END = 577;
const MID = (TOP + BOTTOM) / 2;
const CARRIER = 2.64;

// Samples a function at a fixed step, clipped to the screen.
function wave(fn, step) {
  let d = '';
  for (let x = 0; x <= END; x += step) {
    const y = Math.max(TOP, Math.min(BOTTOM, fn(x)));
    d += (x ? 'L' : 'M') + (LEFT + x).toFixed(2) + ' ' + y.toFixed(1);
  }
  return d;
}

const slow = (x, shift) => Math.sin((x - shift) / DIV * 2 * Math.PI);
const fast = x => Math.cos(x / CARRIER * 2 * Math.PI);

const screens = {
  2: { a: x => 85 - 58 * fast(x), b: x => 229 - 57.7 * slow(x, -1), color: 'red', mark: 225, blue: [29, 72] },
  1: { a: x => 113.4 - 57 * slow(x, 0) - 55 * fast(x), b: x => 220 - 57.7 * slow(x, 6.4), color: '#ff8c00', mark: 249.5, blue: [58, 96] }
};

document.querySelectorAll('[data-scope]').forEach(svg => {
  const s = screens[svg.dataset.scope];
  let grid = '', ticks = '';
  for (let i = 1; i < 10; i++) grid += `M${Math.round(LEFT + i * DIV) - 0.5} 12V296`;
  [56.5, 104.5, 200.5, 248.5].forEach(y => { grid += `M9 ${y}H712`; });
  for (let i = 1; i < 50; i++) {
    const h = i % 5 ? 2 : 4;
    ticks += `M${Math.round(LEFT + i * DIV / 5) - 0.5} ${MID - h}v${2 * h}`;
  }
  svg.innerHTML = `
    <g fill="none" shape-rendering="crispEdges">
      <path d="M8.500 8.500h704v288h-704zM361 5v4M5 152.500h711${ticks}" stroke="#fff"/>
      <path d="${wave(s.a, CARRIER / 12)}" stroke="red"/>
      <path d="${grid}" stroke="#bbb" stroke-dasharray="4 4"/>
      <path d="${wave(s.b, 1)}" stroke="${s.color}"/>
      <path d="M8.500 9v288" stroke="#00ff00"/>
      <path d="M8.500 ${s.blue[0]}V${s.blue[1]}" stroke="#0000e0"/>
    </g>
    <path d="M0 0h17l-8 8z" fill="#f0f"/><path d="M0 0h17l-2 2H2z" fill="#0ff"/><path d="M8.500 2v4" stroke="#ff0"/>
    <circle cx="8.500" cy="${s.mark}" r="2.500" fill="none" stroke="#f0f"/>`;
});
```
